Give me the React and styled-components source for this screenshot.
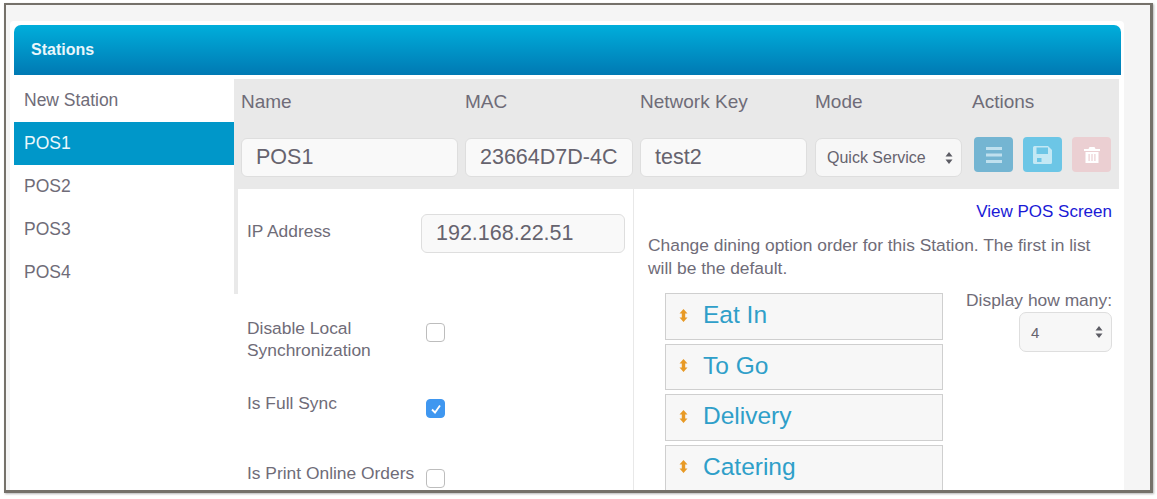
import React from 'react';
import styled, { createGlobalStyle } from 'styled-components';

const GlobalStyle = createGlobalStyle`
  html, body {
    margin: 0;
    padding: 0;
    background: #fff;
  }
  body {
    font-family: "Liberation Sans", Arial, sans-serif;
    color: #6b6875;
  }
`;

const Shot = styled.div`
  width: 1157px;
  height: 499px;
  overflow: hidden;
  padding: 3px 4px 6px 4px;
  box-sizing: border-box;
  background: #fff;
`;

const Frame = styled.div`
  height: 100%;
  box-sizing: border-box;
  border: 2px solid #75716a;
  border-bottom-width: 3px;
  border-right-width: 3px;
  background: #f5f5f5;
  padding: 16px 26px 0 4px;
  overflow: hidden;
  box-shadow: 1px 1px 2px #b5b5b5;
`;

const Card = styled.div`
  background: #fff;
  height: 100%;
  padding: 4px 3px 0 4px;
  box-sizing: border-box;
  border-radius: 4px 4px 0 0;
`;

const Header = styled.div`
  height: 50px;
  box-sizing: border-box;
  padding-left: 17px;
  display: flex;
  align-items: center;
  font-size: 16px;
  font-weight: bold;
  color: #e9f6fb;
  background: linear-gradient(#00aedb, #0079b3);
  border-radius: 7px 7px 0 0;
`;

const Body = styled.div`
  display: flex;
  margin-top: 4px;
  padding-right: 2px;
`;

const Sidebar = styled.div`
  width: 220px;
  flex: none;
`;

const SideItem = styled.div`
  height: 43px;
  padding-left: 10px;
  display: flex;
  align-items: center;
  font-size: 17.5px;
  color: ${p => (p.$active ? '#eaf7fc' : '#6f6c78')};
  background: ${p => (p.$active ? '#0097c9' : 'transparent')};
`;

const Main = styled.div`
  flex: 1;
  min-width: 0;
`;

const TopGrid = styled.div`
  height: 110px;
  box-sizing: border-box;
  background: #e9e9e9;
  padding: 11px 7px 0 7px;
  display: grid;
  grid-template-columns: 224px 175px 175px 157px 1fr;
  grid-template-rows: 24px 39px;
  row-gap: 24px;
`;

const ColLabel = styled.div`
  font-size: 19px;
  line-height: 24px;
  color: #6f6c78;
`;

const TextField = styled.div`
  box-sizing: border-box;
  width: ${p => p.$w}px;
  height: 39px;
  padding-left: 14px;
  display: flex;
  align-items: center;
  font-size: 21.5px;
  color: #66636e;
  background: #f9f9f9;
  border: 1px solid #dedede;
  border-radius: 6px;
  white-space: nowrap;
  overflow: hidden;
`;

const SelectBox = styled.div`
  box-sizing: border-box;
  width: ${p => p.$w}px;
  height: ${p => p.$h || 39}px;
  padding: 0 8px 0 11px;
  display: flex;
  align-items: center;
  justify-content: space-between;
  font-size: ${p => p.$size}px;
  color: #66636e;
  background: #f7f7f7;
  border: 1px solid #dedede;
  border-radius: 7px;
  white-space: nowrap;
`;

const Arrows = () => (
  <svg width="8" height="14" viewBox="0 0 8 14">
    <path d="M4 1 L7.5 5.6 H0.5 Z M4 13 L7.5 8.4 H0.5 Z" fill="#5c5c64" />
  </svg>
);

const ActionRow = styled.div`
  display: flex;
  gap: 10px;
  align-items: flex-start;
  margin-top: -1px;
  padding-left: 2px;
`;

const ActionBtn = styled.div`
  width: 39px;
  height: 35px;
  border-radius: 4px;
  display: flex;
  align-items: center;
  justify-content: center;
  background: ${p => p.$bg};
`;

const Columns = styled.div`
  display: flex;
`;

const LeftCol = styled.div`
  width: 400px;
  flex: none;
  box-sizing: border-box;
  border-right: 1px solid #e8e8e8;
  min-height: 320px;
`;

const IpRow = styled.div`
  height: 105px;
  box-sizing: border-box;
  display: flex;
  align-items: flex-start;
  padding: 25px 0 0 9px;
  border-left: 4px solid #e9e9e9;
`;

const FieldLabel = styled.div`
  width: 174px;
  flex: none;
  font-size: 17.4px;
  line-height: 22px;
  color: #6f6c78;
`;

const IpLabel = styled(FieldLabel)`
  margin-top: 6px;
`;

const CheckRows = styled.div`
  padding: 23px 0 0 13px;
  display: flex;
  flex-direction: column;
`;

const CheckRow = styled.div`
  display: flex;
  height: ${p => p.$h}px;
`;

const CheckLabel = styled(FieldLabel)`
  width: 179px;
  white-space: pre-line;
`;

const Check = styled.div`
  width: 19px;
  height: 19px;
  box-sizing: border-box;
  margin-top: ${p => p.$top}px;
  border-radius: 4px;
  display: flex;
  align-items: center;
  justify-content: center;
  border: 1px solid ${p => (p.$on ? '#3f97f0' : '#bdbdbd')};
  background: ${p => (p.$on ? '#3f97f0' : '#fff')};
`;

const RightCol = styled.div`
  flex: 1;
  min-width: 0;
  padding: 14px 7px 0 14px;
`;

const ViewLink = styled.div`
  text-align: right;
  font-size: 17px;
  line-height: 18px;
  color: #1a1ad6;
`;

const Hint = styled.div`
  margin-top: 13px;
  font-size: 17.4px;
  line-height: 23px;
  color: #6f6c78;
`;

const OrderArea = styled.div`
  display: flex;
  margin-top: 13px;
  padding-left: 17px;
`;

const OrderList = styled.div`
  width: 278px;
  flex: none;
  display: flex;
  flex-direction: column;
  gap: 4px;
`;

const OrderItem = styled.div`
  height: 46.5px;
  box-sizing: border-box;
  display: flex;
  align-items: center;
  gap: 15px;
  padding: 0 0 2px 13px;
  font-size: 24.5px;
  color: #2f9fc9;
  background: #f7f7f7;
  border: 1px solid #cfcfcf;
`;

const Grip = () => (
  <svg width="9" height="13" viewBox="0 0 9 13">
    <path d="M4.5 0 L8.5 4.6 H6.2 V8.4 H8.5 L4.5 13 L0.5 8.4 H2.8 V4.6 H0.5 Z" fill="#e89a25" />
  </svg>
);

const DisplayCol = styled.div`
  flex: 1;
  margin-top: -2px;
  display: flex;
  flex-direction: column;
  align-items: flex-end;
  gap: 3px;
`;

const DisplayLabel = styled.div`
  font-size: 17.4px;
  line-height: 18px;
  color: #6f6c78;
  white-space: nowrap;
`;

const orderNames = ['Eat In', 'To Go', 'Delivery', 'Catering'];

export default function App() {
  return (
    <>
      <GlobalStyle />
      <Shot>
        <Frame>
          <Card>
            <Header>Stations</Header>
            <Body>
              <Sidebar>
                <SideItem>New Station</SideItem>
                <SideItem $active>POS1</SideItem>
                <SideItem>POS2</SideItem>
                <SideItem>POS3</SideItem>
                <SideItem>POS4</SideItem>
              </Sidebar>
              <Main>
                <TopGrid>
                  <ColLabel>Name</ColLabel>
                  <ColLabel>MAC</ColLabel>
                  <ColLabel>Network Key</ColLabel>
                  <ColLabel>Mode</ColLabel>
                  <ColLabel>Actions</ColLabel>
                  <TextField $w={217}>POS1</TextField>
                  <TextField $w={168}>23664D7D-4C</TextField>
                  <TextField $w={167}>test2</TextField>
                  <SelectBox $w={147} $size={16}>
                    Quick Service
                    <Arrows />
                  </SelectBox>
                  <ActionRow>
                    <ActionBtn $bg="#74b5d2">
                      <svg width="16" height="18" viewBox="0 0 16 18">
                        <path d="M0 2.5H16M0 9H16M0 15.5H16" stroke="#bfe0ee" strokeWidth="3" />
                      </svg>
                    </ActionBtn>
                    <ActionBtn $bg="#6cc6e6">
                      <svg width="19" height="18" viewBox="0 0 19 18">
                        <path
                          fill="#c3e8f4"
                          fillRule="evenodd"
                          d="M1.5 0H15L19 4V16.5A1.5 1.5 0 0 1 17.5 18H1.5A1.5 1.5 0 0 1 0 16.5V1.5A1.5 1.5 0 0 1 1.5 0ZM3.5 1.5V8H15V1.5ZM4 12V16H8.5V12Z"
                        />
                      </svg>
                    </ActionBtn>
                    <ActionBtn $bg="#ebcfd2">
                      <svg width="16" height="16" viewBox="0 0 16 16">
                        <path
                          fill="#fff"
                          fillRule="evenodd"
                          d="M5.5 0H10.5L11.5 2H16V4H0V2H4.5ZM1.5 5H14.5V16H1.5ZM4.5 7V14H5.7V7ZM7.4 7V14H8.6V7ZM10.3 7V14H11.5V7Z"
                        />
                      </svg>
                    </ActionBtn>
                  </ActionRow>
                </TopGrid>
                <Columns>
                  <LeftCol>
                    <IpRow>
                      <IpLabel>IP Address</IpLabel>
                      <TextField $w={204}>192.168.22.51</TextField>
                    </IpRow>
                    <CheckRows>
                      <CheckRow $h={75}>
                        <CheckLabel>{'Disable Local\nSynchronization'}</CheckLabel>
                        <Check $top={6} />
                      </CheckRow>
                      <CheckRow $h={70}>
                        <CheckLabel>Is Full Sync</CheckLabel>
                        <Check $top={7} $on>
                          <svg width="12" height="12" viewBox="0 0 12 12">
                            <path d="M2 6.5L5 9.5L10 2.5" fill="none" stroke="#fff" strokeWidth="1.8" />
                          </svg>
                        </Check>
                      </CheckRow>
                      <CheckRow $h={30}>
                        <CheckLabel>Is Print Online Orders</CheckLabel>
                        <Check $top={7} />
                      </CheckRow>
                    </CheckRows>
                  </LeftCol>
                  <RightCol>
                    <ViewLink>View POS Screen</ViewLink>
                    <Hint>
                      Change dining option order for this Station. The first in list will be the default.
                    </Hint>
                    <OrderArea>
                      <OrderList>
                        {orderNames.map(name => (
                          <OrderItem key={name}>
                            <Grip />
                            {name}
                          </OrderItem>
                        ))}
                      </OrderList>
                      <DisplayCol>
                        <DisplayLabel>Display how many:</DisplayLabel>
                        <SelectBox $w={93} $h={40} $size={15}>
                          4
                          <Arrows />
                        </SelectBox>
                      </DisplayCol>
                    </OrderArea>
                  </RightCol>
                </Columns>
              </Main>
            </Body>
          </Card>
        </Frame>
      </Shot>
    </>
  );
}
